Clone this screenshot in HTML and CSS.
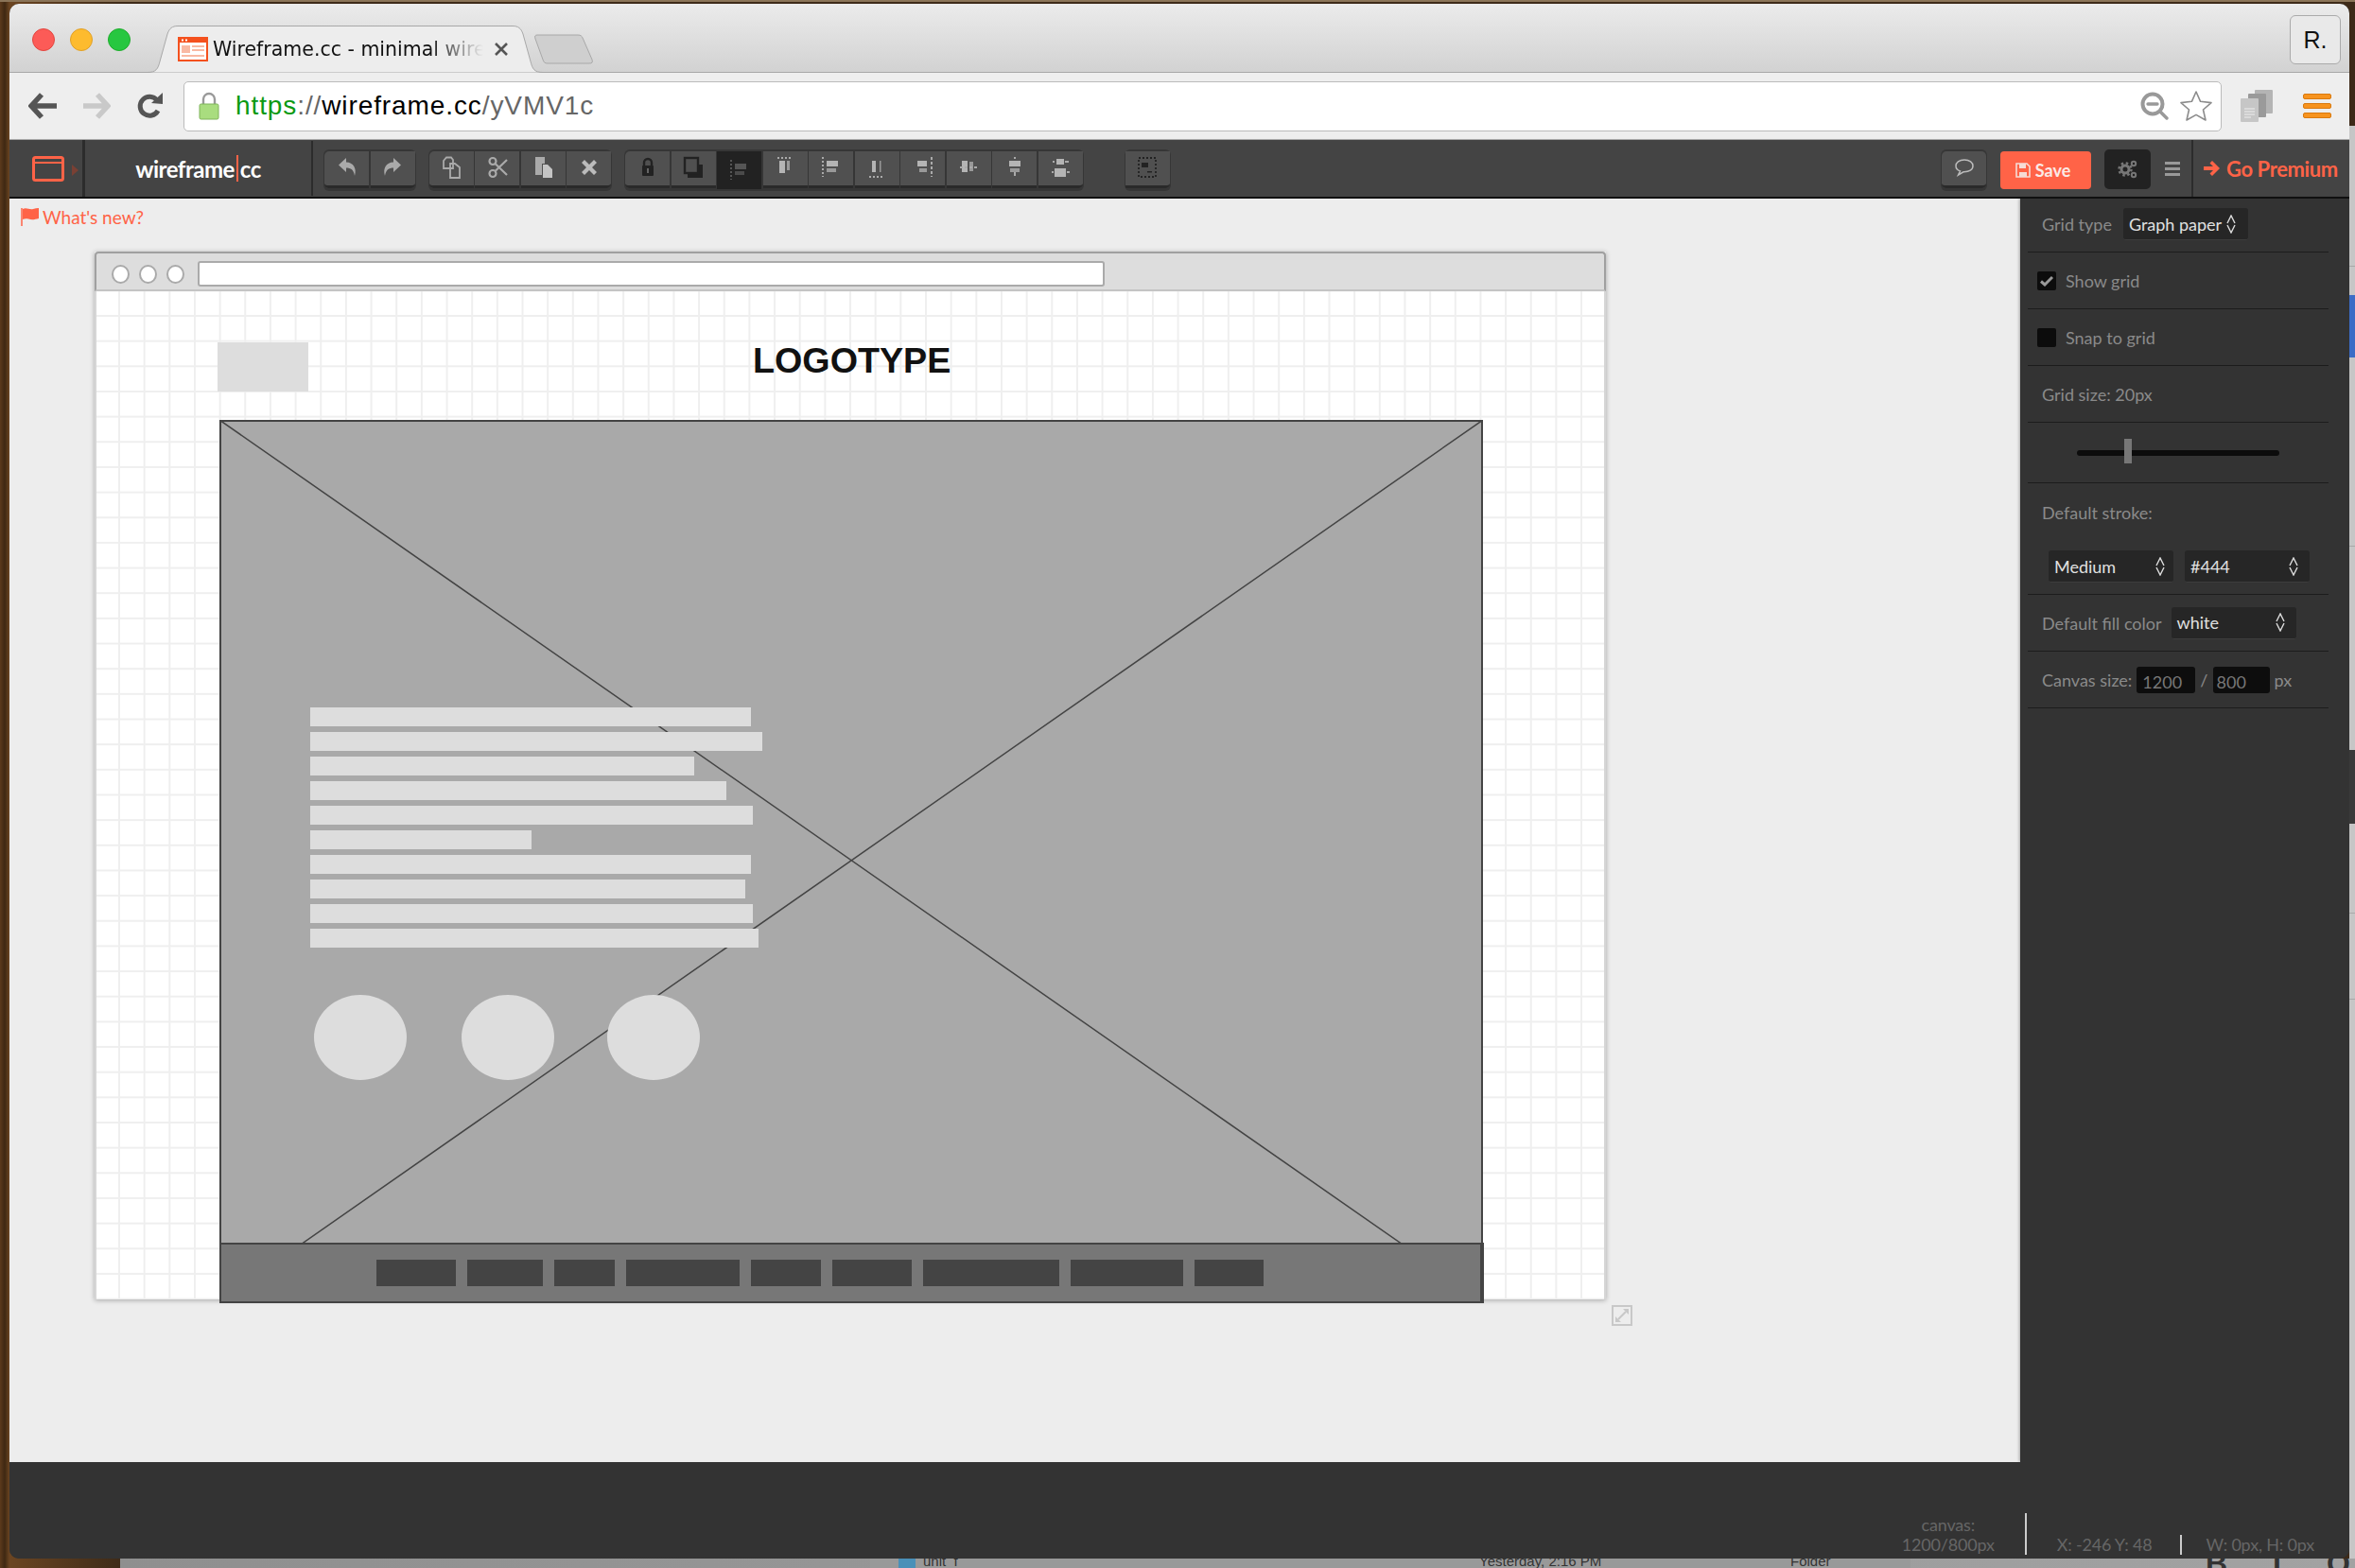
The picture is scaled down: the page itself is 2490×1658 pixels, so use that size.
FILE: index.html
```html
<!DOCTYPE html>
<html lang="en">
<head>
    <meta charset="UTF-8">
    <title>Wireframe.cc - minimal wireframing tool</title>
    <link rel="stylesheet" href="styles.css">
</head>
<body>
<div class="desktop">
    <!-- what shows around the window -->
    <div class="behind-right">
        <div class="behind-blue"></div>
        <div class="behind-dark"></div>
    </div>
    <div class="behind-bottom">
        <div class="behind-panel">
            <span class="behind-folder"></span>
            <span class="behind-name">unit_f</span>
            <span class="behind-date">Yesterday, 2:16 PM</span>
            <span class="behind-kind">Folder</span>
        </div>
        <div class="behind-tools">
            <span>B</span>
            <span>I</span>
            <span>O</span>
        </div>
    </div>

    <div class="window">
        <div class="tabstrip">
            <div class="lights">
                <span class="light light-red"></span>
                <span class="light light-yellow"></span>
                <span class="light light-green"></span>
            </div>
            <div class="tab">
                <svg class="tab-shape" width="418" height="50" viewBox="0 0 418 50">
                    <path d="M0 49.5 C9 49.5 11 46 13 38 L21 9 C23 3 26 .5 32 .5 H386 C392 .5 395 3 397 9 L405 38 C407 46 409 49.5 418 49.5" fill="#ededed" stroke="#a8a8a8"/>
                </svg>
                <svg class="favicon" width="32" height="26" viewBox="0 0 32 26">
                    <rect width="32" height="26" fill="#f4511e"/>
                    <rect x="2" y="6" width="28" height="18" fill="#fff"/>
                    <rect x="4" y="2.5" width="2" height="2" fill="#fff"/>
                    <rect x="8" y="2.5" width="2" height="2" fill="#fff"/>
                    <rect x="4" y="9" width="9" height="8" fill="#f9b9a3"/>
                    <rect x="15" y="9" width="13" height="2" fill="#f9b9a3"/>
                    <rect x="15" y="13" width="13" height="2" fill="#f9b9a3"/>
                    <rect x="4" y="19" width="24" height="2" fill="#f9b9a3"/>
                </svg>
                <span class="tab-title">Wireframe.cc - minimal wireframing tool</span>
                <svg class="tab-close" width="16" height="16" viewBox="0 0 16 16">
                    <path d="M2 2 L14 14 M14 2 L2 14" stroke="#555" stroke-width="2.6"/>
                </svg>
            </div>
            <svg class="newtab" width="62" height="32" viewBox="0 0 62 32">
                <path d="M3 1 H46 C49 1 50 2 51 4 L61 27 C62 30 61 31 58 31 H14 C11 31 10 30 9 27 L1 5 C0 2 1 1 3 1 Z" fill="#cfcfcf" stroke="#a8a8a8"/>
            </svg>
            <div class="avatar">R.</div>
        </div>

        <div class="addressbar">
            <svg class="nav-icon nav-back" width="32" height="28" viewBox="0 0 32 28">
                <path d="M14 2 L3 14 L14 26 M4 14 H30" fill="none" stroke="#555" stroke-width="5.5"/>
            </svg>
            <svg class="nav-icon nav-forward" width="30" height="28" viewBox="0 0 30 28">
                <path d="M16 2 L27 14 L16 26 M26 14 H1" fill="none" stroke="#c9c9c9" stroke-width="5.5"/>
            </svg>
            <svg class="nav-icon nav-reload" width="28" height="28" viewBox="0 0 28 28">
                <path d="M22 19 A10 10 0 1 1 21 8" fill="none" stroke="#555" stroke-width="5"/>
                <path d="M15 11 L27 12 L27 0 Z" fill="#555"/>
            </svg>
            <div class="omnibox">
                <svg class="lock" width="22" height="30" viewBox="0 0 22 30">
                    <path d="M5 14 V8 A6 6 0 0 1 17 8 V14" fill="none" stroke="#9a9a9a" stroke-width="2.4"/>
                    <rect x="1" y="13" width="20" height="16" rx="1.5" fill="#a9dd7f" stroke="#7fb35a"/>
                </svg>
                <span class="url"><span class="url-scheme">https</span><span class="url-dim">://</span><span class="url-host">wireframe.cc</span><span class="url-dim">/yVMV1c</span></span>
                <svg class="zoom-icon" width="30" height="30" viewBox="0 0 30 30">
                    <circle cx="13" cy="13" r="10.5" fill="none" stroke="#999" stroke-width="4"/>
                    <path d="M8 13 H18 M21 21 L28 28" stroke="#999" stroke-width="3.4" stroke-linecap="round"/>
                </svg>
                <svg class="star-icon" width="36" height="34" viewBox="0 0 36 34">
                    <path d="M18 2 L22.6 12.3 L34 13.6 L25.5 21 L28 32 L18 26.4 L8 32 L10.5 21 L2 13.6 L13.4 12.3 Z" fill="#fff" stroke="#8c8c8c" stroke-width="1.6" stroke-linejoin="round"/>
                </svg>
            </div>
            <svg class="ext-icon" width="34" height="34" viewBox="0 0 34 34">
                <rect x="15" y="0" width="19" height="25" rx="1" fill="#b4b4b4"/>
                <rect x="8" y="4" width="19" height="25" rx="1" fill="#9a9a9a"/>
                <rect x="0" y="9" width="19" height="25" rx="1" fill="#c6c6c6"/>
                <path d="M4 20 H15 M4 23 H15 M4 26 H15 M4 29 H11" stroke="#eee" stroke-width="1.2"/>
            </svg>
            <div class="chrome-menu"><span></span><span></span><span></span></div>
        </div>

        <div class="appbar">
            <div class="app-logo">
                <svg width="34" height="27" viewBox="0 0 34 27">
                    <rect x="1.5" y="1.5" width="31" height="24" rx="2" fill="none" stroke="#ff6347" stroke-width="3"/>
                    <rect x="2" y="6" width="30" height="2" fill="#ff6347"/>
                </svg>
                <span class="app-logo-arrow"></span>
            </div>
            <div class="app-name">wireframe<span class="app-name-bar"></span>cc</div>

            <div class="btn-group group-history">
                <button class="tool"><svg width="24" height="24" viewBox="0 0 24 24"><path d="M11 2 L3 9.5 L11 17 V12.5 C16 12.5 19 14.5 20 21 C22.5 13 18.5 6.500 11 6.500 Z" fill="#aaa"/></svg></button>
                <button class="tool"><svg width="24" height="24" viewBox="0 0 24 24"><path d="M13 2 L21 9.5 L13 17 V12.5 C8 12.5 5 14.5 4 21 C1.500 13 5.500 6.500 13 6.500 Z" fill="#aaa"/></svg></button>
            </div>

            <div class="btn-group group-clipboard">
                <button class="tool"><svg width="24" height="24" viewBox="0 0 24 24"><path d="M7 1.500 H12 L14 4 V13 H4 V5 Z M11 8 H16 L21 12 V23 H11 Z" fill="#505050" stroke="#aaa" stroke-width="1.800"/></svg></button>
                <button class="tool"><svg width="24" height="24" viewBox="0 0 24 24"><g fill="none" stroke="#aaa" stroke-width="2.200"><circle cx="7" cy="5.500" r="3.500"/><circle cx="7" cy="18.500" r="3.500"/><path d="M9.500 8 L22 20 M9.500 16 L22 4"/></g></svg></button>
                <button class="tool"><svg width="24" height="24" viewBox="0 0 24 24"><path d="M4 1 H14 V8 H11 V20 H4 Z" fill="#aaa"/><path d="M12 9 H17 L22 14 V23 H12 Z" fill="#c4c4c4"/></svg></button>
                <button class="tool"><svg width="24" height="24" viewBox="0 0 24 24"><path d="M7 4 L12 9 L17 4 L20 7 L15 12 L20 17 L17 20 L12 15 L7 20 L4 17 L9 12 L4 7 Z" fill="#bbb"/></svg></button>
            </div>

            <div class="btn-group group-align">
                <button class="tool"><svg width="24" height="24" viewBox="0 0 24 24"><path d="M8 11 V7 A4 4 0 0 1 16 7 V11" fill="none" stroke="#222" stroke-width="2.400"/><rect x="6" y="10" width="12" height="11" rx="1" fill="#222"/><rect x="11" y="13" width="2" height="5" fill="#666"/></svg></button>
                <button class="tool"><svg width="24" height="24" viewBox="0 0 24 24"><rect x="4" y="10" width="16" height="14" fill="#222" transform="translate(2 -1)"/><rect x="3" y="2" width="14" height="16" fill="#505050" stroke="#222" stroke-width="2.400"/></svg></button>
                <button class="tool tool-active"><svg width="24" height="24" viewBox="0 0 24 24"><path d="M3 1 V22" stroke="#555" stroke-width="2" stroke-dasharray="2 2"/><rect x="7" y="5" width="12" height="6" fill="#555"/><rect x="7" y="13" width="10" height="4" fill="#4a4a4a"/></svg></button>
                <button class="tool"><svg width="24" height="24" viewBox="0 0 24 24"><path d="M4 2 H20" stroke="#aaa" stroke-width="2" stroke-dasharray="2 2"/><rect x="6" y="5" width="6" height="13" fill="#b4b4b4"/><rect x="14" y="5" width="3" height="10" fill="#999"/></svg></button>
                <button class="tool"><svg width="24" height="24" viewBox="0 0 24 24"><path d="M3 1 V22" stroke="#aaa" stroke-width="2" stroke-dasharray="2 2"/><rect x="7" y="5" width="12" height="6" fill="#b4b4b4"/><rect x="7" y="13" width="10" height="4" fill="#999"/></svg></button>
                <button class="tool"><svg width="24" height="24" viewBox="0 0 24 24"><rect x="7" y="5" width="4" height="12" fill="#b4b4b4"/><rect x="15" y="5" width="1.500" height="12" fill="#999"/><path d="M4 22 H20" stroke="#aaa" stroke-width="2" stroke-dasharray="2 2"/></svg></button>
                <button class="tool"><svg width="24" height="24" viewBox="0 0 24 24"><path d="M21 1 V22" stroke="#aaa" stroke-width="2" stroke-dasharray="3 2"/><rect x="6" y="5" width="10" height="6" fill="#b4b4b4"/><rect x="8" y="13" width="8" height="4" fill="#999"/></svg></button>
                <button class="tool"><svg width="24" height="24" viewBox="0 0 24 24"><rect x="5" y="5" width="6" height="12" fill="#b4b4b4"/><rect x="13" y="6" width="4" height="10" fill="#999"/><path d="M3 12 H21" stroke="#aaa" stroke-width="2" stroke-dasharray="3 2"/></svg></button>
                <button class="tool"><svg width="24" height="24" viewBox="0 0 24 24"><path d="M12 1 V3 M12 17 V21" stroke="#aaa" stroke-width="2"/><rect x="6" y="5" width="12" height="6" fill="#b4b4b4"/><rect x="7" y="13" width="10" height="4" fill="#999"/></svg></button>
                <button class="tool"><svg width="24" height="24" viewBox="0 0 24 24"><rect x="8" y="3" width="8" height="6" fill="#b4b4b4"/><rect x="6" y="13" width="12" height="9" fill="#b4b4b4"/><path d="M4 6 H6 M17 6 H21 M3 17 H5 M19 17 H22" stroke="#aaa" stroke-width="2"/></svg></button>
            </div>

            <div class="btn-group group-select">
                <button class="tool"><svg width="24" height="24" viewBox="0 0 24 24"><rect x="3" y="2" width="18" height="20" fill="none" stroke="#222" stroke-width="1.800" stroke-dasharray="2 2"/><rect x="6" y="7" width="7" height="5" fill="#222"/><rect x="12" y="16" width="5" height="1.500" fill="#222"/></svg></button>
            </div>

            <div class="appbar-right">
                <div class="btn-group">
                    <button class="tool tool-single"><svg width="22" height="20" viewBox="0 0 22 20"><path d="M11 2 C5.500 2 2 5 2 8.500 C2 11 3.800 13 6.500 14 L4.500 18 L10 14.800 C16 15 20 12.500 20 8.500 C20 5 16.500 2 11 2 Z" fill="none" stroke="#bbb" stroke-width="1.500"/></svg></button>
                </div>
                <button class="save-btn">
                    <svg width="16" height="16" viewBox="0 0 16 16"><path d="M1 1 H12 L15 4 V15 H1 Z" fill="none" stroke="#f6dcd6" stroke-width="1.600"/><rect x="4" y="1" width="7" height="5" fill="#f6dcd6"/><rect x="4" y="10" width="8" height="5" fill="#f6dcd6"/></svg>
                    Save
                </button>
                <button class="settings-btn">
                    <svg width="22" height="20" viewBox="0 0 22 20"><g fill="none" stroke="#777"><circle cx="8" cy="10" r="4" stroke-width="3"/><circle cx="8" cy="10" r="6.500" stroke-width="2.400" stroke-dasharray="2.500 2.600"/><circle cx="17" cy="4" r="2.200" stroke-width="2"/><circle cx="17" cy="16" r="2.200" stroke-width="2"/></g></svg>
                </button>
                <div class="bars-btn"><span></span><span></span><span></span></div>
                <div class="premium">
                    <svg width="18" height="18" viewBox="0 0 18 18"><path d="M9 1 L17 9 L9 17 L6.500 14.500 L10 11 H0 V7 H10 L6.500 3.500 Z" fill="#ff6347"/></svg>
                    Go Premium
                </div>
            </div>
        </div>

        <div class="main">
            <div class="stage">
                <div class="whats-new">
                    <svg width="20" height="20" viewBox="0 0 20 20"><path d="M1 1 V20" stroke="#ff6347" stroke-width="1.500"/><path d="M2 2 C6 0 9 3 13 2 C15 1.500 17 1 19 1 V12 C15 13 12 14 8 12.500 C6 12 4 12 2 13 Z" fill="#ff6347"/></svg>
                    What's new?
                </div>

                <div class="wf-canvas">
                    <div class="wf-browserbar">
                        <span class="wf-dot"></span>
                        <span class="wf-dot"></span>
                        <span class="wf-dot"></span>
                        <span class="wf-address"></span>
                    </div>
                    <div class="wf-grid"></div>

                    <div class="wf-logo"></div>
                    <div class="wf-title">LOGOTYPE</div>
                    <div class="wf-image">
                        <svg class="wf-cross" viewBox="0 0 1336 934" preserveAspectRatio="none">
                            <path d="M0 0 L1340 934 M1336 0 L-3 934" stroke="#444" stroke-width="1.500"/>
                        </svg>
                        <div class="wf-bar">
                            <span class="wf-block" style="width:84px"></span>
                            <span class="wf-block" style="width:80px"></span>
                            <span class="wf-block" style="width:64px"></span>
                            <span class="wf-block" style="width:120px"></span>
                            <span class="wf-block" style="width:74px"></span>
                            <span class="wf-block" style="width:84px"></span>
                            <span class="wf-block" style="width:144px"></span>
                            <span class="wf-block" style="width:119px"></span>
                            <span class="wf-block" style="width:73px"></span>
                        </div>
                    </div>
                    <div class="wf-lines">
                        <div class="wf-line" style="width:466px"></div>
                        <div class="wf-line" style="width:478px"></div>
                        <div class="wf-line" style="width:406px"></div>
                        <div class="wf-line" style="width:440px"></div>
                        <div class="wf-line" style="width:468px"></div>
                        <div class="wf-line" style="width:234px"></div>
                        <div class="wf-line" style="width:466px"></div>
                        <div class="wf-line" style="width:460px"></div>
                        <div class="wf-line" style="width:468px"></div>
                        <div class="wf-line" style="width:474px"></div>
                    </div>
                    <div class="wf-circle wf-circle-1"></div>
                    <div class="wf-circle wf-circle-2"></div>
                    <div class="wf-circle wf-circle-3"></div>

                    <svg class="wf-resize" width="22" height="22" viewBox="0 0 22 22">
                        <rect x="1" y="1" width="20" height="20" fill="none" stroke="#c8c8c8" stroke-width="2"/>
                        <path d="M12 4 H18 V10 Z M4 12 V18 H10 Z" fill="#c8c8c8"/>
                        <path d="M7 15 L15 7" stroke="#c8c8c8" stroke-width="2"/>
                    </svg>
                </div>
            </div>

            <aside class="sidebar">
                <div class="side-row side-row-first">
                    <span class="side-label">Grid type</span>
                    <span class="select select-grid">Graph paper
                        <svg class="updown" width="10" height="20" viewBox="0 0 10 20"><path d="M1 9 L5 1 L9 9 M1 11 L5 19 L9 11" fill="none" stroke="#ddd" stroke-width="1.400"/></svg>
                    </span>
                </div>
                <div class="side-row side-row-check">
                    <span class="checkbox"><svg width="14" height="12" viewBox="0 0 14 12"><path d="M1 6.500 L5 10 L13 2" fill="none" stroke="#999" stroke-width="3"/></svg></span>
                    <span class="side-label">Show grid</span>
                </div>
                <div class="side-row side-row-check">
                    <span class="checkbox"></span>
                    <span class="side-label">Snap to grid</span>
                </div>
                <div class="side-row">
                    <span class="side-label">Grid size: 20px</span>
                </div>
                <div class="side-row side-row-slider">
                    <div class="slider"><span class="slider-handle"></span></div>
                </div>
                <div class="side-row side-row-stroke">
                    <span class="side-label">Default stroke:</span>
                    <div class="stroke-selects">
                        <span class="select select-wide select-medium">Medium
                            <svg class="updown" width="10" height="20" viewBox="0 0 10 20"><path d="M1 9 L5 1 L9 9 M1 11 L5 19 L9 11" fill="none" stroke="#ddd" stroke-width="1.400"/></svg>
                        </span>
                        <span class="select select-wide">#444
                            <svg class="updown" width="10" height="20" viewBox="0 0 10 20"><path d="M1 9 L5 1 L9 9 M1 11 L5 19 L9 11" fill="none" stroke="#ddd" stroke-width="1.400"/></svg>
                        </span>
                    </div>
                </div>
                <div class="side-row">
                    <span class="side-label">Default fill color</span>
                    <span class="select select-wide select-fill">white
                        <svg class="updown" width="10" height="20" viewBox="0 0 10 20"><path d="M1 9 L5 1 L9 9 M1 11 L5 19 L9 11" fill="none" stroke="#ddd" stroke-width="1.400"/></svg>
                    </span>
                </div>
                <div class="side-row side-row-size">
                    <span class="side-label">Canvas size:</span>
                    <span class="size-input size-input-w">1200</span>
                    <span class="side-label">/</span>
                    <span class="size-input size-input-h">800</span>
                    <span class="side-label">px</span>
                </div>
            </aside>
        </div>

        <div class="statusbar">
            <div class="stat stat-canvas">canvas:<br>1200/800px</div>
            <div class="stat stat-sep stat-tall">X: -246 Y: 48</div>
            <div class="stat stat-sep stat-last">W: 0px, H: 0px</div>
        </div>
    </div>
</div>
</body>
</html>
```

FILE: styles.css
```css
* {
    box-sizing: border-box;
}
body {
    margin: 0;
    font-family: Lato, "Open Sans", sans-serif;
}
.desktop {
    position: relative;
    width: 2490px;
    height: 1658px;
    overflow: hidden;
    background: linear-gradient(90deg, #5c3a1c 0, #3f2812 5px, #6b4522 10px, #3d2a18 130px);
    border-top: 2px solid #8a7458;
}

/* stuff behind the window */
.behind-right {
    position: absolute;
    right: 0;
    top: 131px;
    width: 6px;
    height: 1527px;
    background-color: #c6c6c6;
    background-image:
        linear-gradient(#a8a8a8, #a8a8a8),
        linear-gradient(#a8a8a8, #a8a8a8),
        linear-gradient(#a8a8a8, #a8a8a8),
        linear-gradient(#a8a8a8, #a8a8a8);
    background-repeat: no-repeat;
    background-size: 100% 1px;
    background-position: 0 148px, 0 444px, 0 832px, 0 923px;
}
.behind-blue {
    margin-top: 179px;
    height: 66px;
    background: #3b6cc6;
}
.behind-dark {
    margin-top: 415px;
    height: 78px;
    background: #3a3a3a;
}
.behind-bottom {
    position: absolute;
    left: 127px;
    right: 0;
    bottom: 0;
    height: 10px;
    background: linear-gradient(90deg, #8f8f8f, #a2a2a2);
}
.behind-panel {
    position: absolute;
    left: 793px;
    width: 1100px;
    top: 0;
    height: 10px;
    background: #999;
    font-family: "Liberation Sans", sans-serif;
    font-size: 15px;
    line-height: 10px;
    color: #333;
    overflow: hidden;
}
.behind-panel span {
    position: absolute;
    top: -2px;
}
.behind-folder {
    left: 30px;
    width: 18px;
    height: 12px;
    background: #4a90b8;
}
.behind-name {
    left: 56px;
}
.behind-date {
    left: 644px;
}
.behind-kind {
    left: 973px;
}
.behind-tools {
    position: absolute;
    left: 2205px;
    top: 0;
    display: flex;
    gap: 48px;
    height: 10px;
    overflow: hidden;
    font-family: "Liberation Sans", sans-serif;
    font-size: 32px;
    font-weight: 700;
    line-height: 10px;
    color: #333;
}

.window {
    display: flex;
    flex-direction: column;
    position: relative;
    width: 2474px;
    height: 1644px;
    margin: 2px 0 0 10px;
    border-radius: 10px;
    overflow: hidden;
    background: #333;
}

/* browser tabs */
.tabstrip {
    display: flex;
    align-items: flex-end;
    height: 73px;
    padding-left: 24px;
    background: linear-gradient(#ebebeb, #d2d2d2);
    border-bottom: 1px solid #a8a8a8;
}
.lights {
    display: flex;
    gap: 16px;
    align-self: flex-start;
    margin-top: 26px;
}
.light {
    width: 24px;
    height: 24px;
    border-radius: 50%;
}
.light-red {
    background: #fc5b57;
    border: 1px solid #e2463f;
}
.light-yellow {
    background: #fdbb2e;
    border: 1px solid #e0a028;
}
.light-green {
    background: #27c740;
    border: 1px solid #1dad2b;
}
.tab {
    position: relative;
    display: flex;
    align-items: center;
    width: 418px;
    height: 50px;
    margin-left: 18px;
    margin-bottom: -1px;
    padding-left: 32px;
}
.tab-shape {
    position: absolute;
    left: 0;
    top: 0;
}
.favicon {
    position: relative;
}
.tab-title {
    position: relative;
    width: 286px;
    margin-left: 5px;
    overflow: hidden;
    white-space: nowrap;
    font-family: "DejaVu Sans", sans-serif;
    font-size: 20.5px;
    color: #111;
    -webkit-mask-image: linear-gradient(90deg, #000 80%, transparent);
    mask-image: linear-gradient(90deg, #000 80%, transparent);
}
.tab-close {
    position: relative;
    margin-left: 11px;
}
.newtab {
    margin: 0 0 8px -9px;
}
.avatar {
    align-self: flex-start;
    width: 54px;
    height: 52px;
    margin: 12px 9px 0 auto;
    border: 1px solid #aaa;
    border-radius: 6px;
    background: #e9e9e9;
    font-family: "Liberation Sans", sans-serif;
    font-size: 25px;
    line-height: 50px;
    text-align: center;
    color: #111;
}

/* address bar */
.addressbar {
    display: flex;
    align-items: center;
    height: 71px;
    padding-left: 20px;
    background: #eee;
    border-bottom: 1px solid #aaa;
}
.nav-back {
    margin-right: 25px;
}
.nav-forward {
    margin-right: 28px;
}
.nav-reload {
    margin-right: 21px;
}
.omnibox {
    display: flex;
    align-items: center;
    width: 2155px;
    height: 53px;
    padding: 0 8px 0 15px;
    background: #fff;
    border: 1px solid #bbb;
    border-radius: 5px;
}
.url {
    margin-left: 17px;
    font-family: "Liberation Sans", sans-serif;
    font-size: 28px;
    letter-spacing: .9px;
}
.url-scheme {
    color: #0b9a12;
}
.url-dim {
    color: #666;
}
.url-host {
    color: #000;
}
.zoom-icon {
    margin-left: auto;
}
.star-icon {
    margin-left: 11px;
}
.ext-icon {
    margin-left: 20px;
}
.chrome-menu {
    display: flex;
    flex-direction: column;
    gap: 4px;
    margin-left: 32px;
}
.chrome-menu span {
    width: 30px;
    height: 6px;
    border-radius: 2px;
    background: #f7931e;
    border: 1px solid #d97a10;
}

/* app toolbar */
.appbar {
    display: flex;
    align-items: center;
    height: 62px;
    background: #444;
    border-bottom: 2px solid #111;
}
.app-logo {
    display: flex;
    align-items: center;
    width: 80px;
    height: 60px;
    padding-left: 24px;
    border-right: 3px solid #2c2c2c;
}
.app-logo-arrow {
    width: 0;
    height: 0;
    margin: 4px 0 0 8px;
    border-left: 7px solid #7a4034;
    border-top: 6px solid transparent;
    border-bottom: 6px solid transparent;
}
.app-name {
    display: flex;
    align-items: center;
    justify-content: center;
    width: 241px;
    height: 58px;
    font-size: 24px;
    font-weight: 700;
    letter-spacing: -.5px;
    color: #fff;
    border-right: 2px solid #2c2c2c;
}
.app-name-bar {
    width: 2px;
    height: 28px;
    margin: 0 2px;
    background: #ff6347;
}
.btn-group {
    display: flex;
    gap: 1.5px;
    height: 44px;
    margin-top: 4px;
    padding: 2px 1px;
    background: #363636;
    border-radius: 6px;
}
.group-history {
    margin-left: 11px;
}
.group-clipboard {
    margin-left: 13px;
}
.group-align {
    margin-left: 13px;
}
.group-select {
    margin-left: 43px;
}
.tool {
    display: flex;
    align-items: center;
    justify-content: center;
    width: 47px;
    height: 39px;
    padding: 0 0 3px;
    background: #505050;
    border: 0;
    border-bottom: 3px solid #2a2a2a;
}
.tool:first-child {
    border-radius: 5px 0 0 5px;
}
.tool:last-child {
    border-radius: 0 0 5px 0;
}
.tool-active {
    height: 40px;
    padding: 0;
    background: #222;
    border-bottom: 0;
}
.btn-group .tool-single {
    border-radius: 5px;
}
.appbar-right {
    display: flex;
    align-items: center;
    margin-left: auto;
}
.save-btn {
    display: flex;
    align-items: center;
    justify-content: center;
    gap: 5px;
    width: 96px;
    height: 40px;
    margin: 4px 0 0 14px;
    padding: 0 6px 0 0;
    background: #ff6347;
    border: 0;
    border-radius: 4px;
    font-family: Lato, sans-serif;
    font-size: 18px;
    font-weight: 700;
    color: #fbeae6;
}
.settings-btn {
    display: flex;
    align-items: center;
    justify-content: center;
    width: 49px;
    height: 42px;
    margin: 2px 0 0 14px;
    background: #222;
    border: 0;
    border-radius: 5px;
}
.bars-btn {
    display: flex;
    flex-direction: column;
    gap: 3px;
    margin-left: 15px;
}
.bars-btn span {
    width: 16px;
    height: 3px;
    background: #999;
}
.premium {
    display: flex;
    align-items: center;
    gap: 6px;
    width: 167px;
    height: 60px;
    margin-left: 12px;
    padding-left: 11px;
    border-left: 2px solid #2c2c2c;
    font-size: 22px;
    font-weight: 700;
    letter-spacing: -.4px;
    white-space: nowrap;
    color: #ff6347;
}

/* main area */
.main {
    display: flex;
    height: 1336px;
}
.stage {
    width: 2126px;
    padding: 9px 0 0 12px;
    background: #ededed;
}
.whats-new {
    display: flex;
    align-items: center;
    gap: 3px;
    height: 20px;
    font-size: 19px;
    color: #ff6347;
}

/* the wireframe on the canvas */
.wf-canvas {
    position: relative;
    width: 1598px;
    height: 1108px;
    margin: 27px 0 0 78px;
    box-shadow: 0 1px 5px rgba(0, 0, 0, .3);
}
.wf-browserbar {
    display: flex;
    align-items: center;
    gap: 10px;
    height: 42px;
    padding: 5px 0 0 16px;
    background: #ddd;
    border: 2px solid #a0a0a0;
    border-bottom: 2px solid #c4c4c4;
    border-radius: 4px 4px 0 0;
}
.wf-dot {
    width: 19px;
    height: 20px;
    background: #fff;
    border: 2px solid #aaa;
    border-radius: 50%;
}
.wf-address {
    width: 959px;
    height: 27px;
    margin-left: 4px;
    background: #fff;
    border: 2px solid #aaa;
    border-radius: 3px;
}
.wf-grid {
    height: 1066px;
    background-color: #fff;
    background-image:
        linear-gradient(#efefef 2px, transparent 2px),
        linear-gradient(90deg, #efefef 2px, transparent 2px);
    background-size: 26.667px 26.667px;
    background-position: 23px 25px;
    border: solid #d6d6d6;
    border-width: 0 2px;
}
.wf-logo {
    position: absolute;
    left: 130px;
    top: 96px;
    width: 96px;
    height: 52px;
    background: #ddd;
}
.wf-title {
    position: absolute;
    left: 696px;
    top: 93px;
    font-family: "Liberation Sans", sans-serif;
    font-size: 37.7px;
    font-weight: 700;
    line-height: 44px;
    color: #111;
}
.wf-image {
    position: absolute;
    left: 132px;
    top: 178px;
    width: 1336px;
    height: 934px;
    background: #a9a9a9;
    outline: 2px solid #444;
    outline-offset: -2px;
}
.wf-cross {
    position: absolute;
    left: 0;
    top: 0;
    width: 100%;
    height: 100%;
}
.wf-bar {
    position: absolute;
    left: 0;
    bottom: 0;
    right: -1px;
    display: flex;
    align-items: center;
    gap: 12px;
    height: 64px;
    padding-left: 164px;
    background: #777;
    border: 2px solid #444;
    border-right-width: 4px;
}
.wf-block {
    height: 28px;
    background: #444;
}
.wf-lines {
    position: absolute;
    left: 228px;
    top: 482px;
    display: flex;
    flex-direction: column;
    gap: 6px;
}
.wf-line {
    height: 20px;
    background: #ddd;
}
.wf-circle {
    position: absolute;
    top: 786px;
    width: 98px;
    height: 90px;
    background: #ddd;
    border-radius: 50%;
}
.wf-circle-1 {
    left: 232px;
}
.wf-circle-2 {
    left: 388px;
}
.wf-circle-3 {
    left: 542px;
}
.wf-resize {
    position: absolute;
    left: 1604px;
    top: 1114px;
}

/* right hand settings */
.sidebar {
    width: 348px;
    padding: 0 22px 0 8px;
    background: #333;
    box-shadow: -1px 0 3px rgba(0, 0, 0, .3);
    font-size: 18px;
}
.side-row {
    display: flex;
    align-items: center;
    height: 60px;
    padding-left: 15px;
    border-bottom: 1px solid #1c1c1c;
}
.side-row-first {
    height: 57px;
    padding-bottom: 2px;
}
.side-row-check {
    padding-left: 10px;
}
.side-row-slider {
    height: 64px;
    padding-left: 52px;
}
.side-row-stroke {
    display: block;
    height: 118px;
    padding-top: 20px;
}
.side-row-size {
    gap: 5px;
}
.side-label {
    color: #8a8a8a;
    white-space: nowrap;
}
.select {
    display: flex;
    align-items: center;
    justify-content: space-between;
    height: 34px;
    padding: 0 8px 0 6px;
    background: #262626;
    border-bottom: 1px solid #3d3d3d;
    border-radius: 3px;
    color: #e0e0e0;
}
.select-grid {
    width: 132px;
    margin-left: 12px;
    padding-right: 13px;
}
.select-wide {
    width: 132px;
    padding-right: 12px;
}
.select-medium {
    padding-right: 9px;
}
.select-fill {
    margin-left: 10px;
}
.stroke-selects {
    display: flex;
    gap: 12px;
    margin: 29px 0 0 7px;
}
.checkbox {
    display: flex;
    align-items: center;
    justify-content: center;
    width: 20px;
    height: 20px;
    margin-right: 10px;
    background: #0c0c0c;
    border-radius: 2px;
}
.slider {
    position: relative;
    width: 214px;
    height: 6px;
    background: #0c0c0c;
    border-radius: 3px;
}
.slider-handle {
    position: absolute;
    left: 50px;
    top: -12px;
    width: 8px;
    height: 26px;
    background: #777;
}
.size-input {
    height: 28px;
    padding: 3px 6px 0;
    background: #0d0d0d;
    border-radius: 3px;
    color: #777;
    line-height: 26px;
}
.size-input-w {
    width: 62px;
}
.size-input-h {
    width: 60px;
    padding-left: 4px;
}

/* status line */
.statusbar {
    display: flex;
    align-items: flex-end;
    justify-content: flex-end;
    flex: 1;
    padding-bottom: 4px;
    background: #333;
    font-size: 18px;
    letter-spacing: -.2px;
    line-height: 21px;
    color: #666;
}
.stat {
    text-align: center;
    white-space: nowrap;
}
.stat-canvas {
    padding-right: 32px;
}
.stat-sep {
    padding: 0 32px;
    border-left: 2px solid #ccc;
}
.stat-tall {
    height: 44px;
    padding: 23px 30px 0 32px;
}
.stat-last {
    padding: 0 37px 0 25px;
}
```
